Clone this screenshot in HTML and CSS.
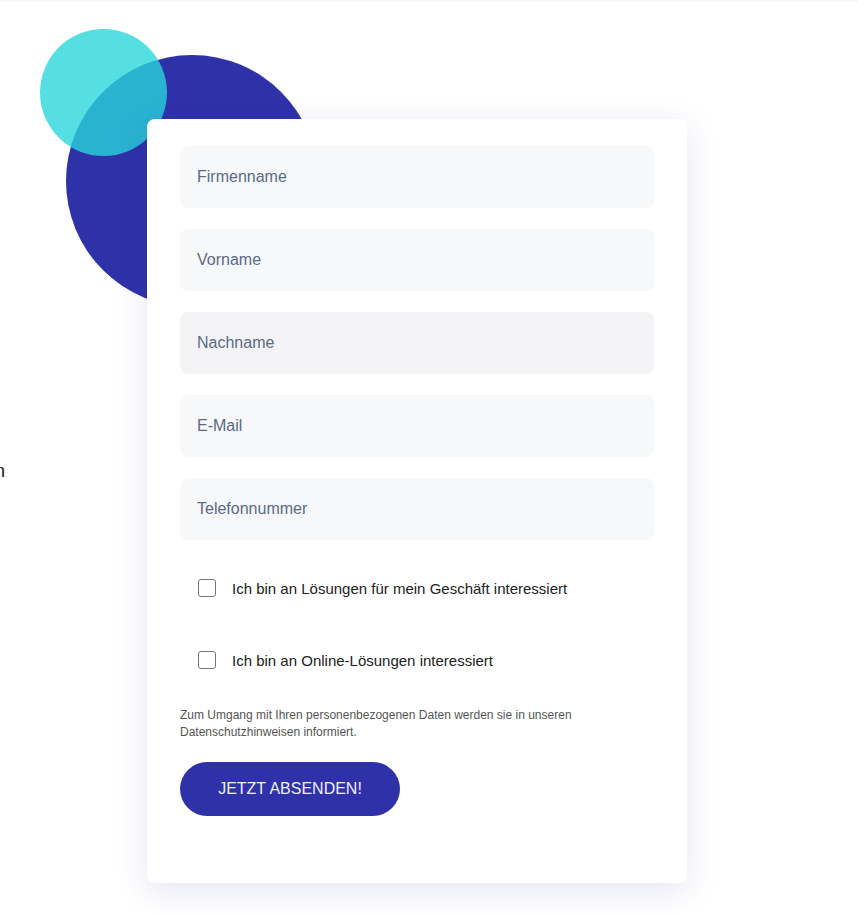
FILE: index.html
```html
<!DOCTYPE html>
<html lang="de">
<head>
<meta charset="utf-8">
<title>Kontakt</title>
<link rel="stylesheet" href="styles.css">
</head>
<body>
<div class="topbar"></div>
<section class="contact">
  <div class="intro">
    <p class="intro-text">Wir freuen uns, von Ihnen zu hören und beraten Sie gern</p>
  </div>
  <div class="form-wrap">
    <div class="blob blob-blue"></div>
    <div class="blob blob-teal"></div>
    <form class="card">
      <input class="field" type="text" placeholder="Firmenname">
      <input class="field" type="text" placeholder="Vorname">
      <input class="field field-hover" type="text" placeholder="Nachname">
      <input class="field" type="email" placeholder="E-Mail">
      <input class="field" type="tel" placeholder="Telefonnummer">
      <label class="check"><span class="box"></span>Ich bin an Lösungen für mein Geschäft interessiert</label>
      <label class="check"><span class="box"></span>Ich bin an Online-Lösungen interessiert</label>
      <p class="note">Zum Umgang mit Ihren personenbezogenen Daten werden sie in unseren Datenschutzhinweisen informiert.</p>
      <button class="submit" type="button">JETZT ABSENDEN!</button>
    </form>
  </div>
</section>
</body>
</html>
```
FILE: styles.css
```css
* { box-sizing: border-box; }
html, body { margin: 0; padding: 0; background: #fff; }
body {
  font-family: "Liberation Sans", Arial, sans-serif;
  color: #222;
  overflow: hidden;
}
.topbar {
  height: 2px;
  background: #f7f7f8;
}
.contact {
  display: flex;
  align-items: flex-start;
}
.intro {
  width: 5px;
  flex: none;
  display: flex;
  justify-content: flex-end;
  padding-top: 457px;
}
.intro-text {
  margin: 0;
  white-space: nowrap;
  font-size: 18px;
  line-height: 24px;
  color: #111;
  flex: none;
}
.form-wrap {
  position: relative;
  margin-left: 142px;
  padding-top: 117px;
  padding-bottom: 30px;
}
.blob {
  position: absolute;
  border-radius: 50%;
}
.blob-blue {
  left: -81px;
  top: 53px;
  width: 252px;
  height: 252px;
  background: #2e31a8;
}
.blob-teal {
  left: -107px;
  top: 27px;
  width: 127px;
  height: 127px;
  background: rgba(41, 215, 219, 0.79);
  z-index: 1;
}
.card {
  position: relative;
  z-index: 2;
  width: 540px;
  background: #fff;
  border-radius: 8px;
  padding: 27px 33px 67px;
  box-shadow: 0 8px 32px rgba(46, 49, 168, 0.13);
  display: flex;
  flex-direction: column;
}
.field {
  display: block;
  width: 474px;
  height: 62px;
  margin: 0 0 21px;
  border: none;
  border-radius: 8px;
  background: #f7f8fa;
  padding: 0 17px;
  font-family: "Liberation Sans", Arial, sans-serif;
  font-size: 16px;
  color: #333;
  outline: none;
}
.field:nth-of-type(5) { margin-bottom: 0; }
.field-hover { background: #f3f3f5; }
.field::placeholder { color: #5b6a86; opacity: 1; }
.check {
  display: flex;
  align-items: center;
  gap: 16px;
  height: 72px;
  padding-left: 18px;
  font-size: 15px;
  color: #222;
}
.check:first-of-type { margin-top: 12px; }
.box {
  width: 18px;
  height: 18px;
  border: 1.5px solid #767676;
  border-radius: 3px;
  background: #fff;
  flex: none;
}
.note {
  margin: 11px 0 0;
  font-size: 12px;
  line-height: 17px;
  color: #555;
  max-width: 460px;
}
.submit {
  margin-top: 21px;
  width: 220px;
  height: 54px;
  border: none;
  border-radius: 27px;
  background: #2e31a8;
  color: #eef0ff;
  font-family: "Liberation Sans", Arial, sans-serif;
  font-size: 16px;
  letter-spacing: 0;
  cursor: pointer;
}
```
